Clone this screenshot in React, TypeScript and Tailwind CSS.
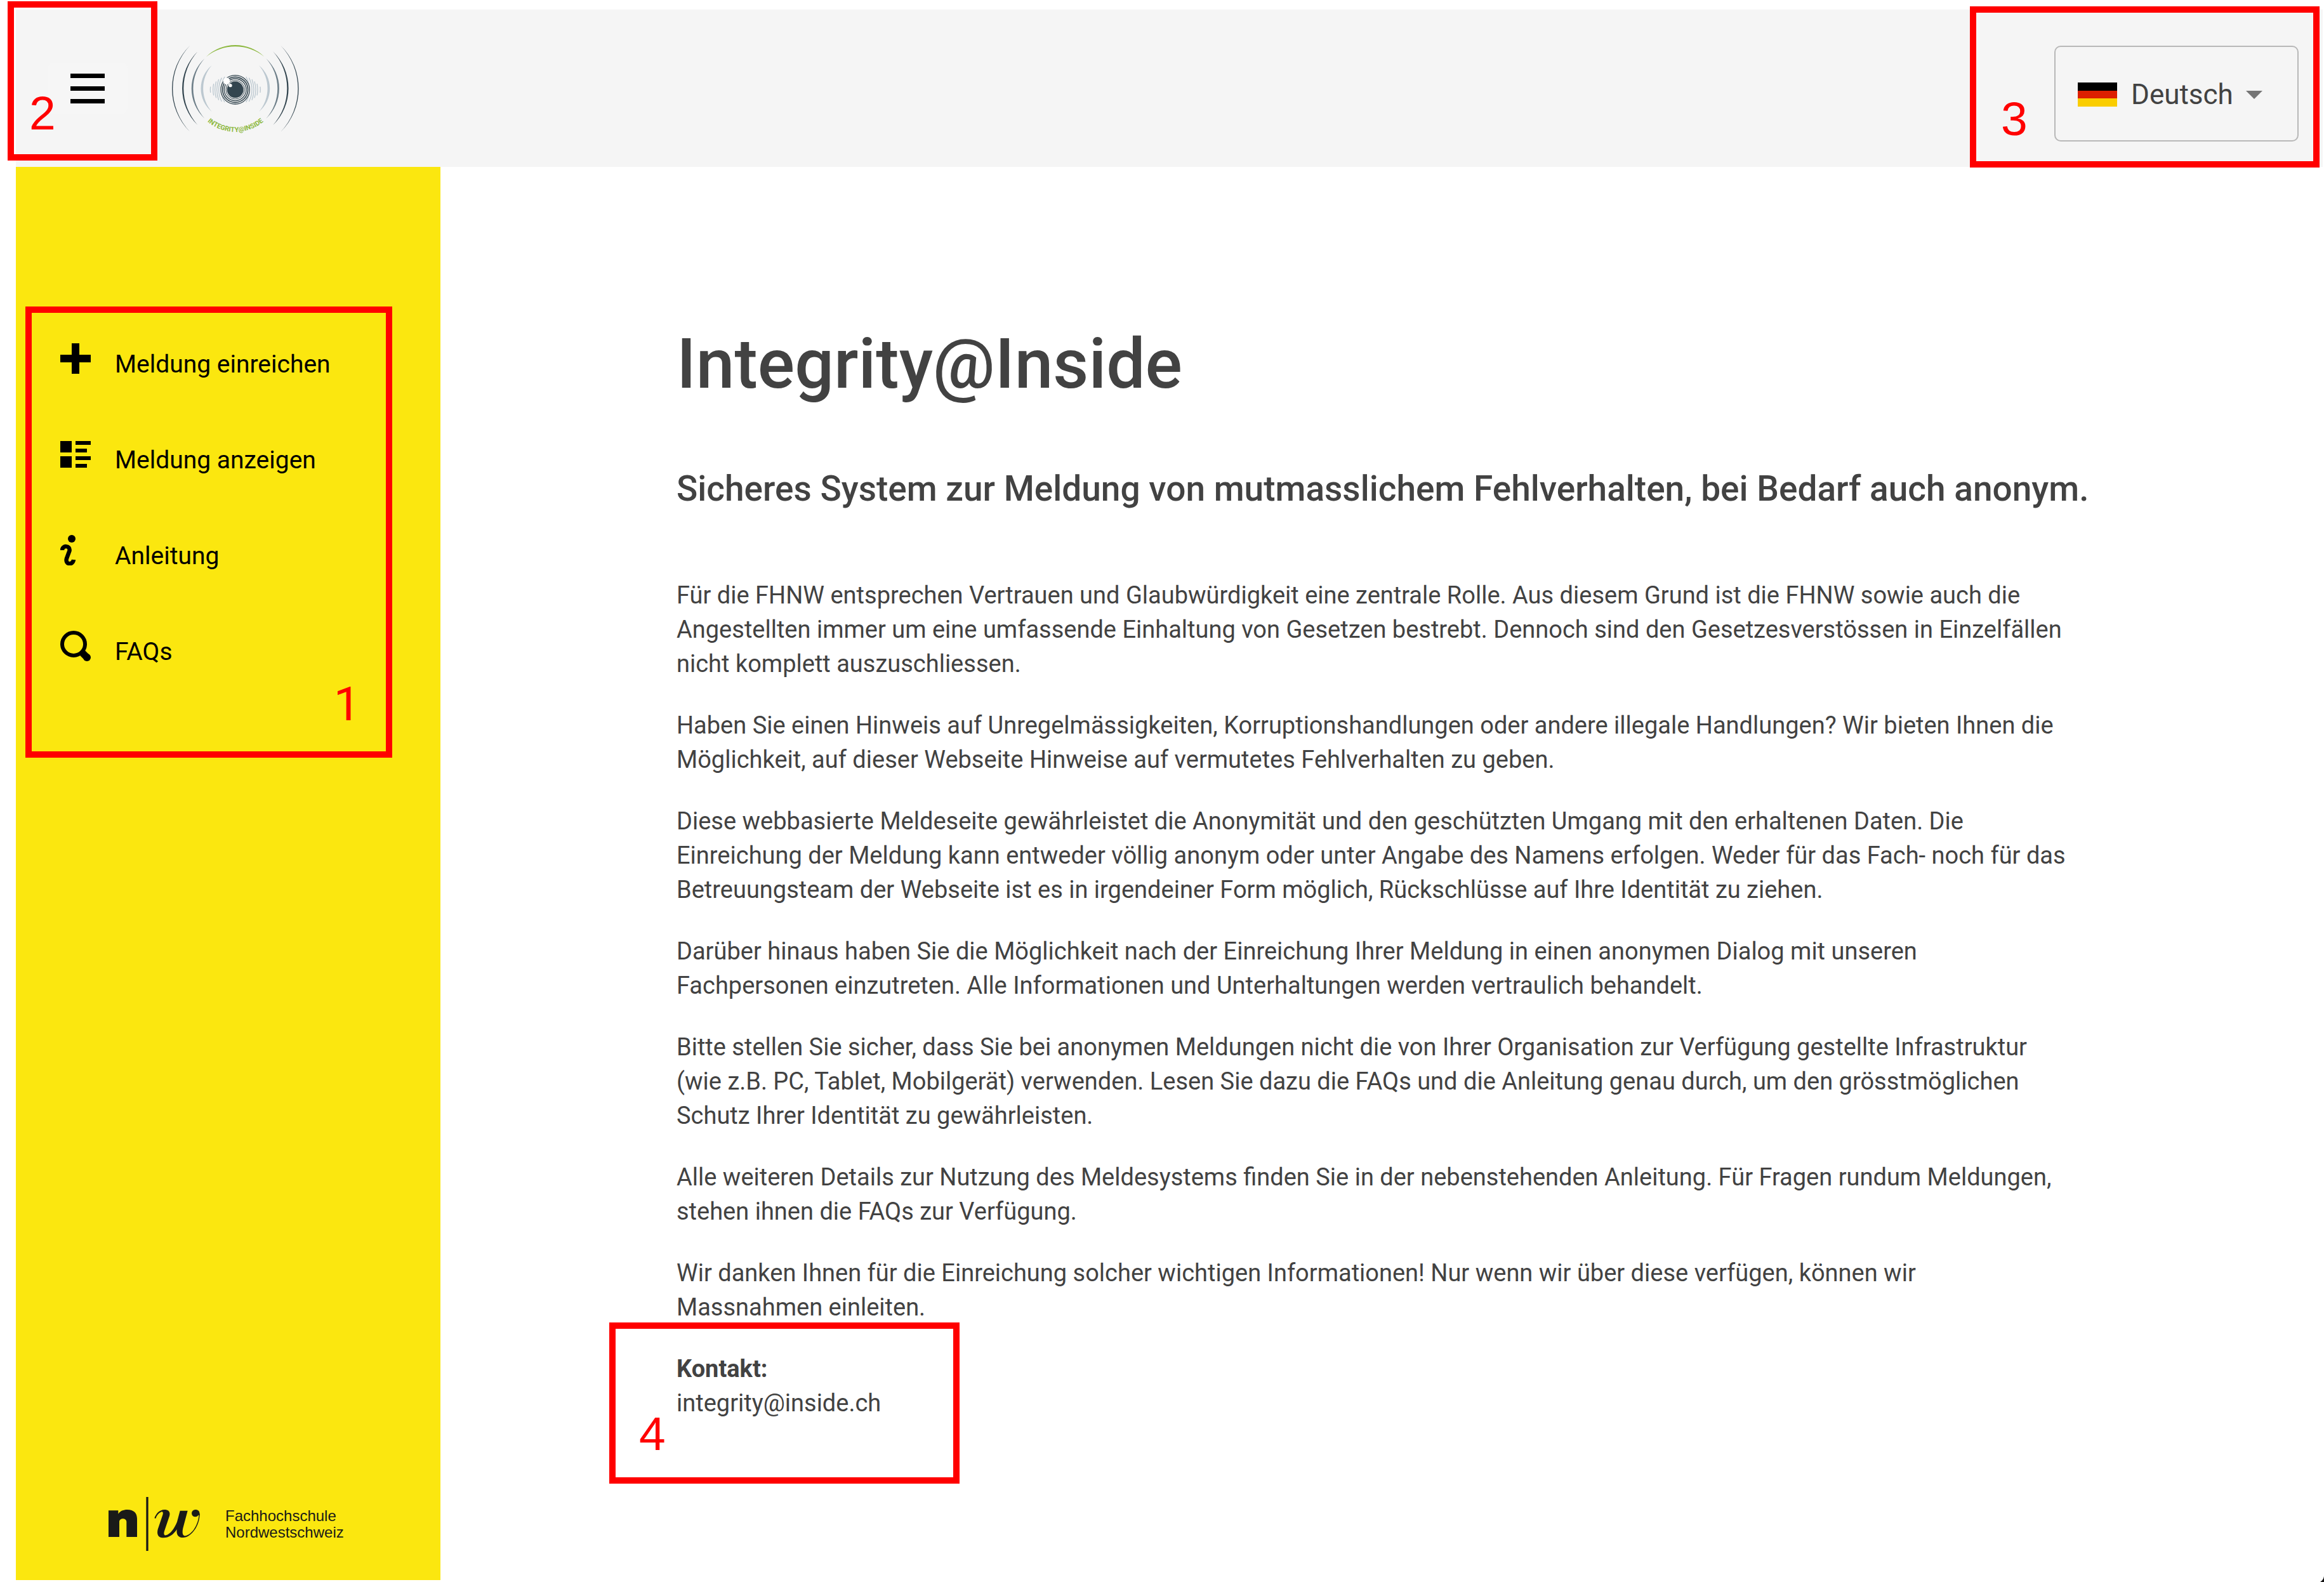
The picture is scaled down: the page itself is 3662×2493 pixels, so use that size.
import { useState } from 'react';

const paragraphs = [
  'Für die FHNW entsprechen Vertrauen und Glaubwürdigkeit eine zentrale Rolle. Aus diesem Grund ist die FHNW sowie auch die Angestellten immer um eine umfassende Einhaltung von Gesetzen bestrebt. Dennoch sind den Gesetzesverstössen in Einzelfällen nicht komplett auszuschliessen.',
  'Haben Sie einen Hinweis auf Unregelmässigkeiten, Korruptionshandlungen oder andere illegale Handlungen? Wir bieten Ihnen die Möglichkeit, auf dieser Webseite Hinweise auf vermutetes Fehlverhalten zu geben.',
  'Diese webbasierte Meldeseite gewährleistet die Anonymität und den geschützten Umgang mit den erhaltenen Daten. Die\nEinreichung der Meldung kann entweder völlig anonym oder unter Angabe des Namens erfolgen. Weder für das Fach- noch für das Betreuungsteam der Webseite ist es in irgendeiner Form möglich, Rückschlüsse auf Ihre Identität zu ziehen.',
  'Darüber hinaus haben Sie die Möglichkeit nach der Einreichung Ihrer Meldung in einen anonymen Dialog mit unseren\nFachpersonen einzutreten. Alle Informationen und Unterhaltungen werden vertraulich behandelt.',
  'Bitte stellen Sie sicher, dass Sie bei anonymen Meldungen nicht die von Ihrer Organisation zur Verfügung gestellte Infrastruktur\n(wie z.B. PC, Tablet, Mobilgerät) verwenden. Lesen Sie dazu die FAQs und die Anleitung genau durch, um den grösstmöglichen\nSchutz Ihrer Identität zu gewährleisten.',
  'Alle weiteren Details zur Nutzung des Meldesystems finden Sie in der nebenstehenden Anleitung. Für Fragen rundum Meldungen,\nstehen ihnen die FAQs zur Verfügung.',
  'Wir danken Ihnen für die Einreichung solcher wichtigen Informationen! Nur wenn wir über diese verfügen, können wir\nMassnahmen einleiten.',
];

const languages = ['Deutsch', 'English', 'Français', 'Italiano'];

const PlusIcon = () => (
  <svg viewBox="0 0 48 48" className="size-12" aria-hidden="true">
    <path d="M18 0h12v18h18v12H30v18H18V30H0V18h18z" />
  </svg>
);

const ListIcon = () => (
  <svg viewBox="0 0 48 48" className="size-12" aria-hidden="true">
    <path d="M0 3h18v18H0zM0 27h18v18H0zM24 3h24v6H24zM24 15h18v6H24zM24 27h24v6H24zM24 39h18v6H24z" />
  </svg>
);

const InfoIcon = () => (
  <svg viewBox="0 0 48 48" className="size-12" aria-hidden="true">
    <circle cx="18" cy="6" r="6" />
    <path
      d="M3 24C3 16 16 16 14.500 25L10 37C7 47 20 48 21 39"
      fill="none"
      stroke="currentColor"
      strokeWidth="6.500"
    />
  </svg>
);

const SearchIcon = () => (
  <svg viewBox="0 0 48 48" className="size-12" aria-hidden="true">
    <circle cx="21" cy="21" r="18" fill="none" stroke="currentColor" strokeWidth="6" />
    <path d="M35 35l7 7" stroke="currentColor" strokeWidth="11" />
    <circle cx="42" cy="42" r="6" />
  </svg>
);

const menu = [
  { label: 'Meldung einreichen', Icon: PlusIcon },
  { label: 'Meldung anzeigen', Icon: ListIcon },
  { label: 'Anleitung', Icon: InfoIcon },
  { label: 'FAQs', Icon: SearchIcon },
];

/* Crescent between two circular arcs sharing the end points (x, y1) and (x, y2). */
function crescent(x: number, y1: number, y2: number, outer: number, inner: number) {
  return `M${x} ${y1}A${outer} ${outer} 0 0 0 ${x} ${y2}A${inner} ${inner} 0 0 1 ${x} ${y1}z`;
}

function EyeHalf() {
  return (
    <>
      <path d={crescent(118, 38, 446, 287, 297)} fill="#33454f" />
      <path d={crescent(154, 67, 414, 243, 261)} fill="#33454f" />
      <path d={crescent(187, 100, 383, 193, 213)} fill="#6d7e88" />
      <path d={crescent(221, 132, 351, 142, 168)} fill="#bcc8d0" />
      <g fill="none" stroke="#bcc8d0" strokeWidth="4">
        <path d="M215 233Q213 247 215 261" />
        <path d="M230 219Q224 247 230 274" />
        <path d="M242 208Q230 247 242 286" />
        <path d="M254 198Q236 247 254 296" />
        <path d="M268 191Q240 247 268 303" />
        <path d="M282 186Q248 247 282 306" />
      </g>
    </>
  );
}

function EyeLogo() {
  return (
    <svg viewBox="0 0 660 480" className="h-40 w-[220px]" role="img" aria-label="Integrity@Inside">
      <EyeHalf />
      <g transform="translate(665 0) scale(-1 1)">
        <EyeHalf />
      </g>
      <path d="M194 92A198 198 0 0 1 470 92A219 219 0 0 0 194 92z" fill="#8db840" />
      <circle cx="332" cy="247" r="71" fill="#f5f5f5" />
      <g fill="none" stroke="#33454f">
        <circle cx="332" cy="247" r="68" strokeWidth="4" />
        <circle cx="332" cy="247" r="60" strokeWidth="5" />
        <circle cx="332" cy="247" r="52" strokeWidth="4" />
        <circle cx="332" cy="247" r="44" strokeWidth="3" />
      </g>
      <circle cx="332" cy="247" r="39" fill="#33454f" />
      <circle cx="291" cy="206" r="16" fill="#fff" />
      <circle cx="309" cy="227" r="8" fill="#fff" />
      <path id="logo-arc" d="M186 384A204 204 0 0 0 480 384" fill="none" />
      <text fill="#8db840" fontSize="32" fontWeight="700" className="font-['Roboto',sans-serif]">
        <textPath href="#logo-arc" startOffset="50%" textAnchor="middle">
          INTEGRITY@INSIDE
        </textPath>
      </text>
    </svg>
  );
}

function SchoolLogo() {
  return (
    <div className="flex items-center text-[#1a1a18]">
      <svg viewBox="33 27 438 255" className="h-[85px] w-[146px]" role="img" aria-label="n w">
        <g fill="currentColor">
          <path d="M33 91H79V107C88 93 103 87 122 87C152 87 168 103 168 130V216H118V145C118 125 84 125 84 145V216H33z" />
          <path d="M211 27h10v255h-10z" />
          <path d="M250 127C258 105 272 88 297 87C318 87 326 99 321 117L298 185C292 202 296 210 304 208C325 204 345 175 357 145L371 92H407L385 175C380 198 384 212 396 211C430 205 458 155 460 112L464 104C466 160 425 219 385 219C362 219 353 205 356 180C340 205 318 220 293 220C268 220 260 204 266 180L289 112C293 99 288 94 281 98C268 104 260 115 256 129z" />
          <circle cx="443" cy="104" r="17" />
          <path d="M443 87C458 87 465 95 464 114L459 114z" />
        </g>
      </svg>
      <p className="ml-[38px] font-['Liberation_Sans',sans-serif] text-[24px] leading-[26px]">
        Fachhochschule
        <br />
        Nordwestschweiz
      </p>
    </div>
  );
}

function Callout({ label, box, text }: { label: string; box: string; text: string }) {
  return (
    <div className={`pointer-events-none absolute border-10 border-[#ff0000] ${box}`}>
      <span className={`absolute text-[75px] leading-[75px] text-[#ff0000] ${text}`}>{label}</span>
    </div>
  );
}

export default function App() {
  const [open, setOpen] = useState(true);
  const [language, setLanguage] = useState('Deutsch');

  return (
    <div className="relative flex min-h-screen flex-col bg-white pt-[15px] pb-[3px] pl-[25px] font-['Roboto',sans-serif] text-[#424242]">
      <header className="relative mr-0.5 flex h-[248px] items-center bg-[#f5f5f5] pr-[38px] pl-[50px]">
        <button
          type="button"
          aria-label="Menü"
          aria-expanded={open}
          onClick={() => setOpen(!open)}
          className="flex h-20 w-[126px] flex-col items-center justify-center gap-[13px] rounded-lg bg-[#f6f6f6]"
        >
          <span className="h-[7px] w-[54px] bg-black" />
          <span className="h-[7px] w-[54px] bg-black" />
          <span className="h-[7px] w-[54px] bg-black" />
        </button>
        <a href="#start" className="ml-[59px]">
          <EyeLogo />
        </a>
        <div className="relative mt-4 ml-auto flex h-[151px] w-[385px] items-center rounded-[10px] border-2 border-[#b8b8b8] pt-1 pl-[35px]">
          <span className="flex h-[38px] w-[62px] flex-col" aria-hidden="true">
            <span className="flex-1 bg-black" />
            <span className="flex-1 bg-[#dd1f00]" />
            <span className="flex-1 bg-[#facd00]" />
          </span>
          <select
            aria-label="Sprache"
            value={language}
            onChange={(e) => setLanguage(e.target.value)}
            className="ml-[22px] h-16 w-[181px] appearance-none bg-transparent text-[44px] leading-[64px]"
          >
            {languages.map((name) => (
              <option key={name}>{name}</option>
            ))}
          </select>
          <svg viewBox="0 0 26 13" className="h-[13px] w-[26px]" aria-hidden="true">
            <path d="M0 0h26L13 13z" fill="#757575" />
          </svg>
        </div>
        <Callout
          label="2"
          box="-top-[13px] -left-[13px] h-[251px] w-[236px]"
          text="top-[129px] left-6 font-['Liberation_Sans',sans-serif]"
        />
        <Callout
          label="3"
          box="-top-[5px] right-[5px] h-[254px] w-[551px]"
          text="top-[130px] left-[39px] font-['Liberation_Sans',sans-serif]"
        />
      </header>

      <div className="flex flex-1">
        {open && (
          <aside className="flex w-[669px] shrink-0 flex-col bg-[#fbe70f] pt-[220px] pb-[46px] text-black">
            <nav className="relative ml-[15px] h-[711px] w-[578px] pt-[47px] pl-[55px]">
              <ul>
                {menu.map(({ label, Icon }) => (
                  <li key={label}>
                    <a
                      href={`#${label}`}
                      className="mb-[63px] flex h-[88px] items-start gap-[38px] text-[39px] leading-[88px]"
                    >
                      <span className="mt-[11px]">
                        <Icon />
                      </span>
                      {label}
                    </a>
                  </li>
                ))}
              </ul>
              <Callout
                label="1"
                box="inset-0"
                text="right-10 bottom-[37px] font-['Roboto',sans-serif]"
              />
            </nav>
            <div className="mt-auto ml-[146px]">
              <SchoolLogo />
            </div>
          </aside>
        )}

        <main className="min-w-0 flex-1 pt-[248px] pr-[356px] pl-[372px]">
          <h1 className="text-[109px] leading-[126px] font-medium">Integrity@Inside</h1>
          <h2 className="mt-[97px] text-[55px] leading-[72px] font-medium">
            Sicheres System zur Meldung von mutmasslichem Fehlverhalten, bei Bedarf auch anonym.
          </h2>
          <div className="mt-[105px] flex flex-col gap-[43px] text-[38px] leading-[54px] whitespace-pre-line">
            {paragraphs.map((text) => (
              <p key={text}>{text}</p>
            ))}
            <address className="relative whitespace-normal not-italic">
              <strong>Kontakt:</strong>
              <br />
              <a href="mailto:integrity@inside.ch">integrity@inside.ch</a>
              <Callout
                label="4"
                box="-top-[46px] -left-[106px] h-[254px] w-[552px]"
                text="top-[128px] left-[37px] font-['Liberation_Sans',sans-serif]"
              />
            </address>
          </div>
        </main>
      </div>

      <svg viewBox="0 0 6 9" className="absolute right-0 bottom-0 h-[9px] w-1.5" aria-hidden="true">
        <path d="M6 0v9H0Q5 6 6 0z" fill="#111" />
      </svg>
    </div>
  );
}
